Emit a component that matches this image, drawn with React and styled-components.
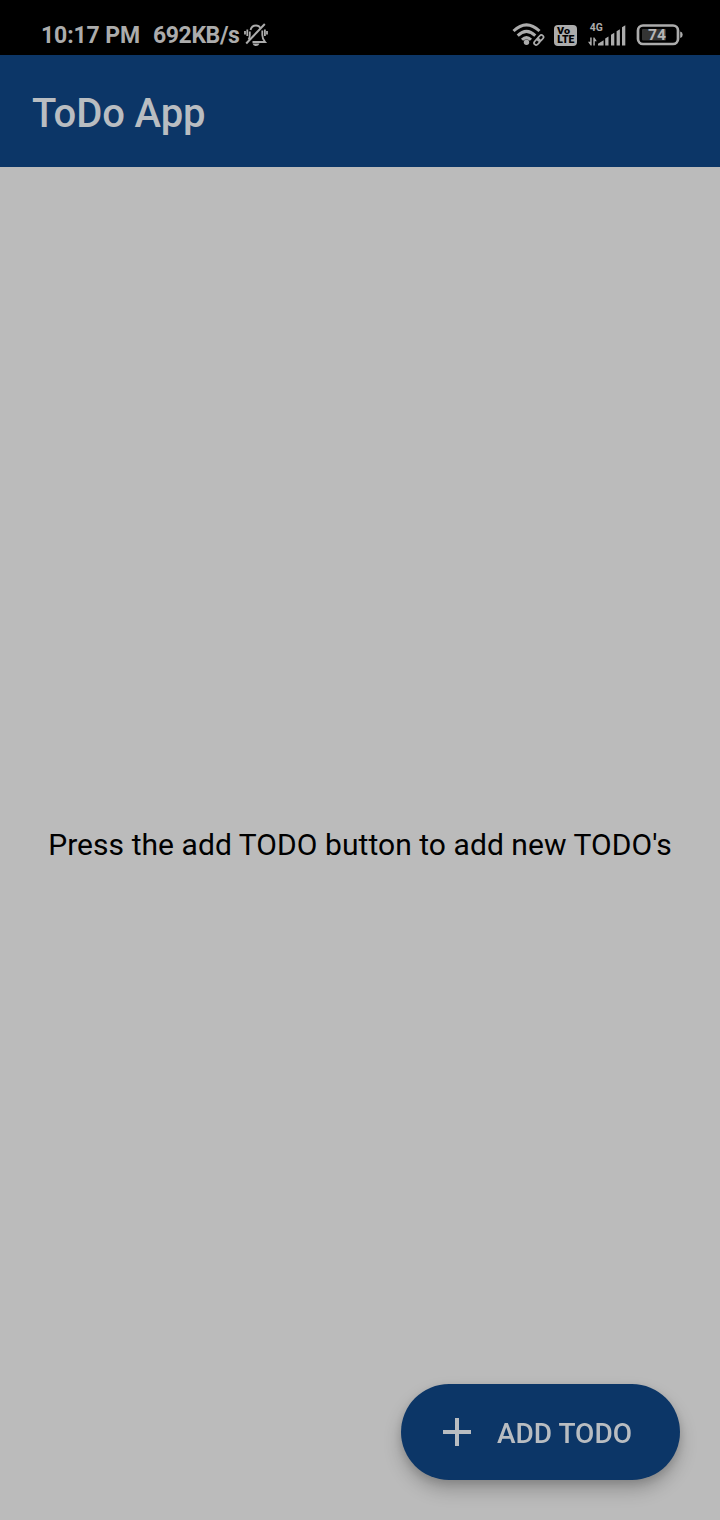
import React from "react";
import styled, { createGlobalStyle } from "styled-components";

const GlobalStyle = createGlobalStyle`
  * { box-sizing: border-box; }
  body { margin: 0; background: #bbbbbb; font-family: Roboto, "Liberation Sans", sans-serif; }
`;

const Screen = styled.div`
  width: 720px;
  height: 1520px;
  display: flex;
  flex-direction: column;
  background: #bbbbbb;
`;

const StatusBar = styled.div`
  height: 55px;
  flex: none;
  display: flex;
  align-items: center;
  padding: 15px 37px 0 41px;
  background: #000;
  color: #acacac;
`;

const StatusText = styled.span`
  width: ${(p) => p.$width}px;
  padding-top: 2px;
  font-size: 23px;
  line-height: 38px;
  font-weight: 700;
  letter-spacing: ${(p) => p.$spacing}px;
  white-space: pre;
`;

const StatusIcons = styled.div`
  margin-left: auto;
  display: flex;
  align-items: center;
`;

const Icon = styled.svg`
  display: block;
  flex: none;
  margin-right: ${(p) => p.$gap || 0}px;
  overflow: visible;
  font-family: Roboto, sans-serif;
  font-weight: 900;
`;

const AppBar = styled.header`
  height: 112px;
  flex: none;
  display: flex;
  align-items: center;
  padding: 6px 32px 0;
  background: #0c3667;
`;

const Title = styled.h1`
  margin: 0;
  font-size: 40px;
  line-height: 48px;
  font-weight: 500;
  letter-spacing: -0.1px;
  color: #b9bdc1;
`;

const Content = styled.main`
  flex: 1;
  display: flex;
  align-items: center;
  justify-content: center;
  padding-top: 2px;
`;

const EmptyMessage = styled.p`
  margin: 0;
  font-size: 30px;
  line-height: 40px;
  letter-spacing: 0.06px;
  white-space: nowrap;
  color: #000;
`;

const AddButton = styled.button`
  position: fixed;
  right: 40px;
  bottom: 40px;
  width: 279px;
  height: 96px;
  display: flex;
  align-items: center;
  padding: 0 0 0 41px;
  border: 0;
  border-radius: 48px;
  background: #0c3667;
  color: #b9bdc1;
  box-shadow: 0 10px 18px rgba(0, 0, 0, 0.22), 0 3px 10px rgba(0, 0, 0, 0.13);
  font-family: inherit;
`;

const ButtonLabel = styled.span`
  padding-top: 3px;
  font-size: 28px;
  line-height: 36px;
  font-weight: 500;
  letter-spacing: 0;
  white-space: nowrap;
`;

const MutedBell = () => (
  <Icon width="24" height="24" viewBox="0 0 24 24" fill="none" stroke="#acacac" strokeWidth="1.8">
    <path d="M6.500 7C7.200 4 9 2.500 12 2.500c2.200 0 3.600 1 4.400 2.500M18.300 7.500V12c0 3.500 1 5 2.800 7H8.500M5.800 8.500V12c0 2-.5 3.500-1.300 4.500" />
    <path d="M20.800 1L2.200 20.500" strokeWidth="2" />
    <path d="M8.500 20.500h7c-.7 1.700-1.900 2.500-3.500 2.500s-2.800-.8-3.500-2.500z" fill="#acacac" stroke="none" />
    <path d="M3.300 6.500v6.500M20.900 6.500v6.500M1 8v3.600M23 8v3.600" />
  </Icon>
);

const Wifi = () => (
  <Icon $gap={9} width="32" height="24" viewBox="0 0 32 24" fill="none" stroke="#acacac">
    <path d="M0.500 8Q13.500-4.400 26.500 8M4.700 12.600Q13.500 4.200 22.300 12.600M9 16.800Q13.500 12.400 18 16.800" strokeWidth="3" />
    <circle cx="13.500" cy="19.300" r="2.700" fill="#acacac" stroke="none" />
    <g transform="translate(25.800 17) rotate(-48)" strokeWidth="1.700">
      <rect x="-6" y="-2.100" width="6.800" height="4.200" rx="2.100" />
      <rect x="-0.800" y="-2.100" width="6.800" height="4.200" rx="2.100" />
    </g>
  </Icon>
);

const VoLte = () => (
  <Icon $gap={11} width="23" height="21" viewBox="0 0 23 21">
    <rect width="23" height="21" rx="4" fill="#acacac" />
    <text x="3" y="9" fontSize="9.500" textLength="13" lengthAdjust="spacingAndGlyphs">Vo</text>
    <text x="3.300" y="18.300" fontSize="10" textLength="17" lengthAdjust="spacingAndGlyphs">LTE</text>
  </Icon>
);

const Signal = () => (
  <Icon $gap={11} width="38" height="24" viewBox="0 0 38 24" fill="#acacac">
    <text x="1.800" y="7.500" fontSize="10" fontWeight="700" textLength="13" lengthAdjust="spacingAndGlyphs">4G</text>
    <path d="M2.200 14.500h1.500V22.500H2.600L0 18.800h2.200zM5.300 22.500V14.500h1.100l2.400 3.700H6.800v4.300z" />
    <path d="M10 22.500v-1.700l5.600-3.600v5.300zM17.200 15.600l3.300-2.100v9h-3.300zM23 11.800l3.300-2.100v12.800H23zM28.600 8.300l3.300-2.100v16.300h-3.300zM34 4.300l3.300-2.100v20.300H34z" />
  </Icon>
);

const Battery = () => (
  <Icon width="46" height="22" viewBox="0 0 46 22">
    <rect x="1" y="1.500" width="40" height="18.500" rx="5" fill="none" stroke="#acacac" strokeWidth="2.700" />
    <rect x="5" y="5" width="24" height="11.500" rx="1" fill="#343434" />
    <path d="M43.200 7.500q2.500.5 2.500 3.250t-2.500 3.250z" fill="#acacac" />
    <text x="11" y="16.200" fontSize="15.500" fontWeight="700" fill="#b5b5b5" textLength="18" lengthAdjust="spacingAndGlyphs">74</text>
  </Icon>
);

const Plus = () => (
  <Icon $gap={26} width="29" height="28" viewBox="0 0 29 28" fill="none" stroke="#b9bdc1" strokeWidth="4">
    <path d="M1 14h28M15 0v28" />
  </Icon>
);

export default function App() {
  return (
    <Screen>
      <GlobalStyle />
      <StatusBar>
        <StatusText $width={112} $spacing={-0.12}>10:17 PM</StatusText>
        <StatusText $width={91} $spacing={-0.4}>692KB/s</StatusText>
        <MutedBell />
        <StatusIcons>
          <Wifi />
          <VoLte />
          <Signal />
          <Battery />
        </StatusIcons>
      </StatusBar>
      <AppBar>
        <Title>ToDo App</Title>
      </AppBar>
      <Content>
        <EmptyMessage>Press the add TODO button to add new TODO's</EmptyMessage>
      </Content>
      <AddButton>
        <Plus />
        <ButtonLabel>ADD TODO</ButtonLabel>
      </AddButton>
    </Screen>
  );
}
